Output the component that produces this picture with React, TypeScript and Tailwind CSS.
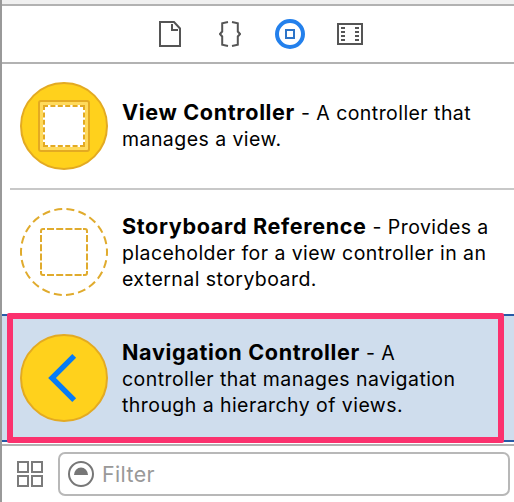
import type { ReactNode } from "react";

function FileIcon() {
  return (
    <svg width="22" height="26" viewBox="0 0 22 26" fill="none" stroke="#555" strokeWidth="2">
      <path d="M1 1H15L21 7.5V25H1Z" />
      <path d="M13 3V9H19" />
    </svg>
  );
}

function BracesIcon() {
  return (
    <svg width="22" height="26" viewBox="0 0 22 26" fill="none" stroke="#555" strokeWidth="2">
      <path d="M9 1L3.2 2.2V10.5L1 13L3.2 15.5V23.8L9 25" />
      <path d="M13 1L18.8 2.2V10.5L21 13L18.8 15.5V23.8L13 25" />
    </svg>
  );
}

function ObjectIcon() {
  return (
    <svg width="30" height="30" viewBox="0 0 30 30" fill="none">
      <circle cx="15" cy="15" r="13" stroke="#2380ec" strokeWidth="4" />
      <rect x="11" y="11" width="8" height="8" stroke="#2d74c8" strokeWidth="2" />
    </svg>
  );
}

function MediaIcon() {
  return (
    <svg width="26" height="22" viewBox="0 0 26 22" fill="none" stroke="#555" strokeWidth="2">
      <rect x="1" y="1" width="24" height="20" />
      <path d="M4 5H8M4 9H8M4 13H8M4 17H8M18 5H22M18 9H22M18 13H22M18 17H22" />
    </svg>
  );
}

function ViewControllerIcon() {
  return (
    <svg className="shrink-0" width="88" height="88" viewBox="0 0 88 88" fill="none" stroke="#e3aa22" strokeWidth="2">
      <circle cx="44" cy="44" r="43" fill="#ffd11c" />
      <rect x="19" y="19" width="50" height="50" rx="2" fill="#ffda5c" />
      <rect x="23" y="23" width="42" height="42" fill="#fff" stroke="none" />
      <path d="M23 24H65M23 64H65" strokeDasharray="5 2.4" />
      <path d="M24 23V65M64 23V65" strokeDasharray="5 2.4" />
    </svg>
  );
}

function StoryboardIcon() {
  return (
    <svg className="shrink-0" width="88" height="88" viewBox="0 0 88 88" fill="none" stroke="#e0ab2d" strokeWidth="2">
      <circle cx="44" cy="44" r="43" strokeDasharray="8 4.28" strokeDashoffset="4" />
      <path d="M21 25V23Q21 21 23 21H25M63 21H65Q67 21 67 23V25M67 63V65Q67 67 65 67H63M25 67H23Q21 67 21 65V63" />
      <path d="M27 21H62M27 67H62M21 27V62M67 27V62" strokeDasharray="7 2.2" />
    </svg>
  );
}

function NavigationIcon() {
  return (
    <svg className="shrink-0" width="88" height="88" viewBox="0 0 88 88" fill="none">
      <circle cx="44" cy="44" r="43" fill="#ffd11c" stroke="#e3aa22" strokeWidth="2" />
      <path d="M54.2 21.8L32 44L54.2 66.2" stroke="#087cf5" strokeWidth="5.4" />
    </svg>
  );
}

function Bold({ children }: { children: ReactNode }) {
  return <b className="text-[21.6px] leading-none font-bold tracking-[0.64px]">{children}</b>;
}

function Line({ children }: { children: ReactNode }) {
  return <div className="h-[26px] whitespace-nowrap">{children}</div>;
}

function Item({ icon, children }: { icon: ReactNode; children: ReactNode }) {
  return (
    <div className="flex h-[124px] items-center pl-[18px]">
      {icon}
      <div className="ml-[14px] text-[19.5px] leading-[26px] tracking-[0.44px] text-black">{children}</div>
    </div>
  );
}

export default function App() {
  return (
    <div className="flex h-[502px] w-[514px] flex-col overflow-hidden border-l-2 border-[#999] bg-white font-['Inter',sans-serif]">
      <div className="h-1.5 shrink-0 border-b-2 border-[#b2b2b2] bg-[#f0f0f0]" />
      <header className="flex h-[58px] shrink-0 items-center border-b-2 border-[#b2b2b2] pl-[157px]">
        <FileIcon />
        <div className="ml-[38px]"><BracesIcon /></div>
        <div className="ml-[34px]"><ObjectIcon /></div>
        <div className="ml-8"><MediaIcon /></div>
      </header>
      <main className="h-[380px] shrink-0">
        <Item icon={<ViewControllerIcon />}>
          <Line><Bold>View Controller</Bold> - A controller that</Line>
          <Line>manages a view.</Line>
        </Item>
        <div className="ml-2 h-0.5 bg-[#c8c8c8]" />
        <Item icon={<StoryboardIcon />}>
          <div className="pt-0.5">
            <Line><Bold>Storyboard Reference</Bold> - Provides a</Line>
            <Line>placeholder for a view controller in an</Line>
            <Line>external storyboard.</Line>
          </div>
        </Item>
        <div className="relative border-y-2 border-[#285aa7] bg-[#cfdded]">
          <Item icon={<NavigationIcon />}>
            <div className="pt-0.5">
              <Line><Bold>Navigation Controller</Bold> - A</Line>
              <Line>controller that manages navigation</Line>
              <Line>through a hierarchy of views.</Line>
            </div>
          </Item>
          <div className="absolute -top-[3px] left-[5px] h-[130px] w-[497px] rounded-[2px] border-[6px] border-[#fb316e]" />
        </div>
      </main>
      <footer className="flex h-[58px] shrink-0 items-start border-t-2 border-[#b2b2b2] pt-1.5 pl-[15px]">
        <svg className="mt-[9px]" width="26" height="26" viewBox="0 0 26 26" fill="none" stroke="#7b7b7b" strokeWidth="2">
          <path d="M1 1H11V11H1ZM15 1H25V11H15ZM1 15H11V25H1ZM15 15H25V25H15Z" />
        </svg>
        <div className="ml-[15px] flex h-11 w-[452px] items-center rounded-[7px] border-2 border-[#b8b8b8] pl-2">
          <svg width="26" height="26" viewBox="0 0 26 26" fill="none">
            <circle cx="13" cy="13" r="12" stroke="#777" strokeWidth="2" />
            <path d="M6 14A7 7.5 0 0 1 20 14Z" fill="#777" />
          </svg>
          <span className="ml-2 text-[21.4px] leading-[26px] tracking-[0.4px] text-[#999]">Filter</span>
        </div>
      </footer>
    </div>
  );
}
